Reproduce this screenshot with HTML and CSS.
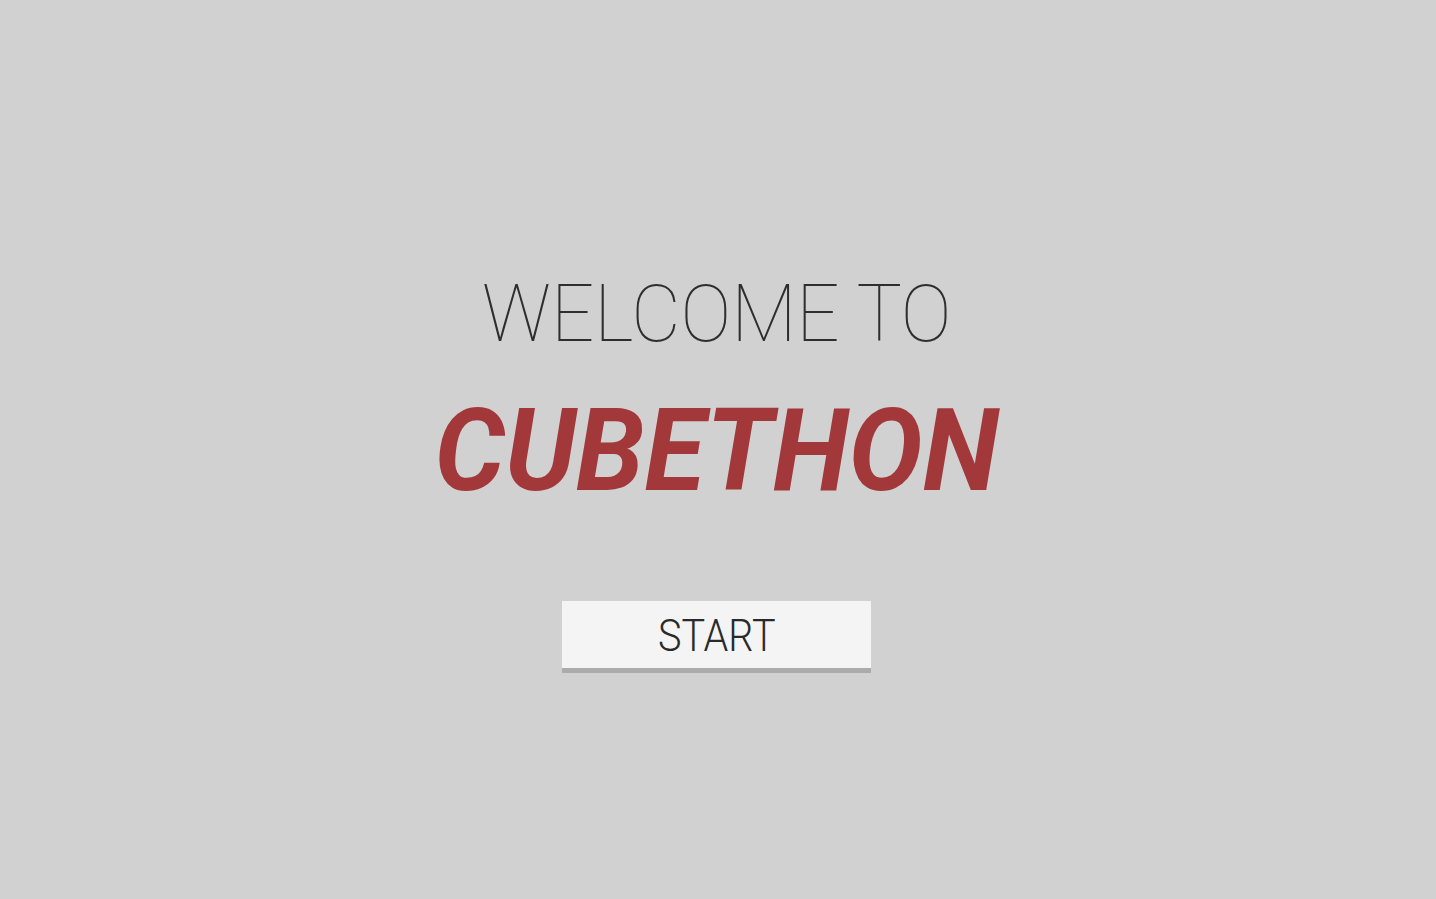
FILE: index.html
```html
<!DOCTYPE html>
<html lang="en">
<head>
<meta charset="utf-8">
<title>Cubethon</title>
<link rel="stylesheet" href="styles.css">
</head>
<body>
<main class="welcome">
  <h2 class="welcome-sub">WELCOME TO</h2>
  <h1 class="welcome-title">CUBETHON</h1>
  <button class="start-btn" type="button"><span class="start-label">START</span></button>
</main>
</body>
</html>
```

FILE: styles.css
```css
html, body {
  margin: 0;
  padding: 0;
  height: 100%;
  background: #d1d1d1;
}
body {
  font-family: Roboto, "Liberation Sans", sans-serif;
}
.welcome {
  display: flex;
  flex-direction: column;
  align-items: center;
  padding-top: 274px;
  padding-right: 3px;
}
.welcome-sub {
  margin: 0;
  font-size: 80px;
  line-height: 1;
  font-weight: 100;
  color: #2e2e2e;
  transform: scaleX(0.951);
}
.welcome-title {
  margin: 39px 0 0;
  font-size: 115px;
  line-height: 1;
  font-weight: 700;
  font-style: italic;
  color: #a3383a;
  transform: scaleX(0.964);
}
.start-btn {
  margin-top: 93px;
  width: 309px;
  height: 72px;
  padding: 12px 0 10px;
  box-sizing: border-box;
  border: none;
  border-bottom: 5px solid #ababab;
  background: #f4f4f4;
  font-family: Roboto, "Liberation Sans", sans-serif;
  font-size: 45px;
  line-height: 1;
  font-weight: 300;
  color: #2a2a2a;
  cursor: pointer;
}
.start-label {
  display: inline-block;
  transform: scaleX(0.88);
}
```
